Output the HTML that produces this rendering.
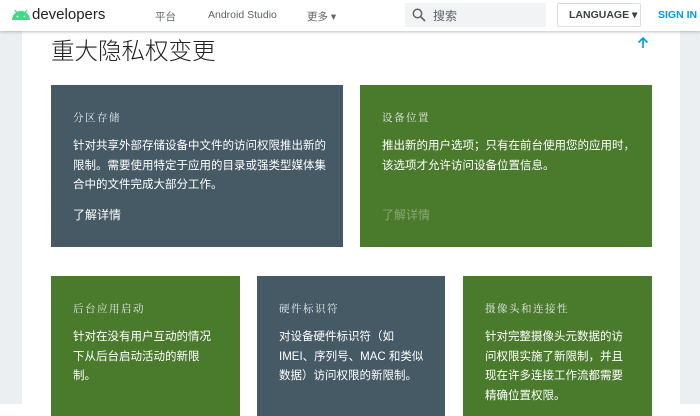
<!DOCTYPE html>
<html><head><meta charset="utf-8"><style>
*{margin:0;padding:0;box-sizing:border-box}
body{width:700px;height:404px;overflow:hidden;background:#fff;font-family:"Liberation Sans","Noto Sans CJK SC",sans-serif;position:relative}
.lg{position:absolute;left:0;top:31px;width:22px;height:373px;background:#eceff1}
.rg{position:absolute;left:680px;top:31px;width:20px;height:373px;background:#eceff1}
.hd{position:absolute;left:0;top:0;width:700px;height:31px;background:#fff;box-shadow:0 1px 3px rgba(0,0,0,.25);z-index:2}
.hd span{position:absolute;top:9px;font-size:10.5px;color:#5f6368}
.logo{position:absolute;left:32px;top:6px;font-size:15px;color:#202124}
.search{position:absolute;left:405px;top:3px;width:141px;height:24px;background:#f1f3f4}
.lang{position:absolute;left:557px;top:3px;width:84px;height:24px;border:1px solid #dadce0;border-radius:2px;background:#fff}
h1{position:absolute;left:51px;top:33px;font-size:23.5px;color:#202124;font-family:"Noto Sans CJK SC",sans-serif;font-weight:300;line-height:32px}
.c{position:absolute;color:#fff;padding:22px 12px 22px 22px}
.s{background:#455a64}.g{background:#4a7a2b}
.c .l{font-size:10.5px;letter-spacing:1.5px;font-family:"Noto Serif CJK SC",serif;margin-top:3px;color:#e8ecee;height:18px}
.c .b{font-size:11.5px;line-height:19.5px;margin-top:9px}
.sm{padding-right:20px}
.c .m{font-size:12px;position:absolute;left:22px}
</style></head><body>
<div class="lg"></div><div class="rg"></div>
<div class="hd">
<svg style="position:absolute;left:11px;top:9px" width="20" height="11" viewBox="0 0 20 11"><path d="M1 11 A9 9 0 0 1 19 11Z" fill="#3ddc84"/><line x1="4" y1="1" x2="6" y2="4" stroke="#3ddc84" stroke-width="1.2"/><line x1="16" y1="1" x2="14" y2="4" stroke="#3ddc84" stroke-width="1.2"/><circle cx="6.5" cy="7.5" r="0.9" fill="#fff"/><circle cx="13.5" cy="7.5" r="0.9" fill="#fff"/></svg>
<div class="logo">developers</div>
<span style="left:155px">平台</span>
<span style="left:208px">Android Studio</span>
<span style="left:307px">更多 ▾</span>
<div class="search"><svg style="position:absolute;left:7px;top:5px" width="14" height="14" viewBox="0 0 14 14"><circle cx="5.5" cy="5.5" r="4.2" fill="none" stroke="#5f6368" stroke-width="1.5"/><line x1="8.5" y1="8.5" x2="13" y2="13" stroke="#5f6368" stroke-width="1.6"/></svg><span style="left:28px;top:4px;font-size:12px">搜索</span></div>
<div class="lang"><span style="left:11px;top:5px;font-size:10.5px;color:#3c4043;font-weight:bold">LANGUAGE ▾</span></div>
<span style="left:658px;top:9px;font-size:10.5px;font-weight:bold;color:#039be5">SIGN IN</span>
</div>
<h1>重大隐私权变更</h1>
<svg style="position:absolute;left:637px;top:36px" width="12" height="13" viewBox="0 0 12 13"><path d="M6 12V2M1.5 6.5L6 2l4.5 4.5" fill="none" stroke="#039be5" stroke-width="1.6"/></svg>
<div class="c s" style="left:51px;top:85px;width:292px;height:162px"><div class="l">分区存储</div><div class="b">针对共享外部存储设备中文件的访问权限推出新的限制。需要使用特定于应用的目录或强类型媒体集合中的文件完成大部分工作。</div><div class="m" style="top:121px">了解详情</div></div>
<div class="c g" style="left:360px;top:85px;width:292px;height:162px"><div class="l">设备位置</div><div class="b">推出新的用户选项；只有在前台使用您的应用时，该选项才允许访问设备位置信息。</div><div class="m" style="top:121px;color:#8aa872">了解详情</div></div>
<div class="c g sm" style="left:51px;top:276px;width:189px;height:140px"><div class="l">后台应用启动</div><div class="b">针对在没有用户互动的情况下从后台启动活动的新限制。</div></div>
<div class="c s sm" style="left:257px;top:276px;width:188px;height:140px"><div class="l">硬件标识符</div><div class="b">对设备硬件标识符（如 IMEI、序列号、MAC 和类似数据）访问权限的新限制。</div></div>
<div class="c g sm" style="left:463px;top:276px;width:189px;height:140px"><div class="l">摄像头和连接性</div><div class="b">针对完整摄像头元数据的访问权限实施了新限制，并且现在许多连接工作流都需要精确位置权限。</div></div>
</body></html>
